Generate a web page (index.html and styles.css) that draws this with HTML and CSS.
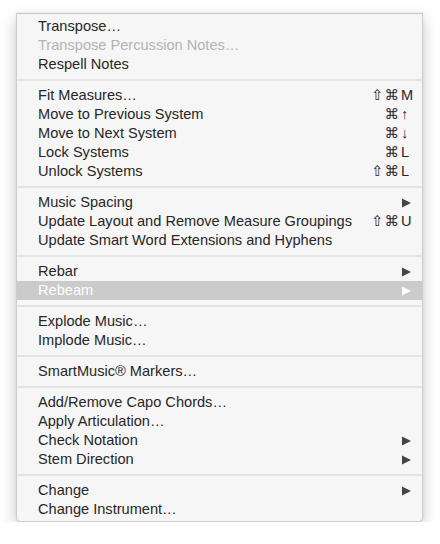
FILE: index.html
```html
<!DOCTYPE html>
<html>
<head>
<meta charset="utf-8">
<link rel="stylesheet" href="styles.css">
</head>
<body>
<div class="menu">
  <div class="item"><span class="label">Transpose…</span></div>
  <div class="item disabled"><span class="label">Transpose Percussion Notes…</span></div>
  <div class="item"><span class="label">Respell Notes</span></div>
  <div class="sep"></div>
  <div class="item"><span class="label">Fit Measures…</span><span class="mods">⇧⌘</span><span class="key">M</span></div>
  <div class="item"><span class="label">Move to Previous System</span><span class="mods">⌘</span><span class="key">↑</span></div>
  <div class="item"><span class="label">Move to Next System</span><span class="mods">⌘</span><span class="key">↓</span></div>
  <div class="item"><span class="label">Lock Systems</span><span class="mods">⌘</span><span class="key">L</span></div>
  <div class="item"><span class="label">Unlock Systems</span><span class="mods">⇧⌘</span><span class="key">L</span></div>
  <div class="sep"></div>
  <div class="item"><span class="label">Music Spacing</span><span class="arrow"><svg width="14" height="10" viewBox="0 0 14 10"><path d="M2 0.5 L11 5 L2 9.5 Z"/></svg></span></div>
  <div class="item"><span class="label">Update Layout and Remove Measure Groupings</span><span class="mods">⇧⌘</span><span class="key">U</span></div>
  <div class="item"><span class="label">Update Smart Word Extensions and Hyphens</span></div>
  <div class="sep"></div>
  <div class="item"><span class="label">Rebar</span><span class="arrow"><svg width="14" height="10" viewBox="0 0 14 10"><path d="M2 0.5 L11 5 L2 9.5 Z"/></svg></span></div>
  <div class="item selected"><span class="label">Rebeam</span><span class="arrow"><svg width="14" height="10" viewBox="0 0 14 10"><path d="M2 0.5 L11 5 L2 9.5 Z"/></svg></span></div>
  <div class="sep"></div>
  <div class="item"><span class="label">Explode Music…</span></div>
  <div class="item"><span class="label">Implode Music…</span></div>
  <div class="sep"></div>
  <div class="item"><span class="label">SmartMusic® Markers…</span></div>
  <div class="sep"></div>
  <div class="item"><span class="label">Add/Remove Capo Chords…</span></div>
  <div class="item"><span class="label">Apply Articulation…</span></div>
  <div class="item"><span class="label">Check Notation</span><span class="arrow"><svg width="14" height="10" viewBox="0 0 14 10"><path d="M2 0.5 L11 5 L2 9.5 Z"/></svg></span></div>
  <div class="item"><span class="label">Stem Direction</span><span class="arrow"><svg width="14" height="10" viewBox="0 0 14 10"><path d="M2 0.5 L11 5 L2 9.5 Z"/></svg></span></div>
  <div class="sep"></div>
  <div class="item"><span class="label">Change</span><span class="arrow"><svg width="14" height="10" viewBox="0 0 14 10"><path d="M2 0.5 L11 5 L2 9.5 Z"/></svg></span></div>
  <div class="item"><span class="label">Change Instrument…</span></div>
</div>
</body>
</html>
```

FILE: styles.css
```css
html, body {
  margin: 0;
  padding: 0;
  background: #ffffff;
}
body {
  padding: 13px 0 0 16px;
  font-family: "Liberation Sans", Arial, sans-serif;
  font-size: 14.6px;
  color: #262626;
}
.menu {
  width: 405px;
  box-sizing: content-box;
  background: #f6f6f6;
  border: 1px solid #cdcdcd;
  border-top-color: #c4c4c4;
  border-radius: 0 0 5px 5px;
  padding: 3px 0 2px 0;
  box-shadow: 0 6px 16px rgba(0, 0, 0, 0.22), 0 0 3px rgba(0, 0, 0, 0.06);
}
.item {
  display: flex;
  align-items: center;
  height: 19px;
  padding: 0 8px 0 21px;
  line-height: 19px;
  white-space: nowrap;
}
.label {
  flex: 1;
}
.disabled {
  color: #b3b3b3;
}
.selected {
  background: #cbcbcb;
  color: #ffffff;
}
.mods {
  text-align: right;
  font-family: "DejaVu Sans", sans-serif;
  font-size: 14.5px;
  letter-spacing: 1px;
  color: #2a2a2a;
}
.key {
  width: 14px;
  padding-left: 1px;
  box-sizing: border-box;
}
.key, .mods {
  line-height: 19px;
}
.arrow {
  width: 14px;
  height: 10px;
  display: flex;
}
.arrow svg {
  fill: #444444;
}
.selected .arrow svg {
  fill: #ffffff;
}
.sep {
  height: 12px;
  display: flex;
  align-items: center;
}
.sep::before {
  content: "";
  display: block;
  width: 100%;
  height: 2px;
  background: #e4e4e4;
}
```
